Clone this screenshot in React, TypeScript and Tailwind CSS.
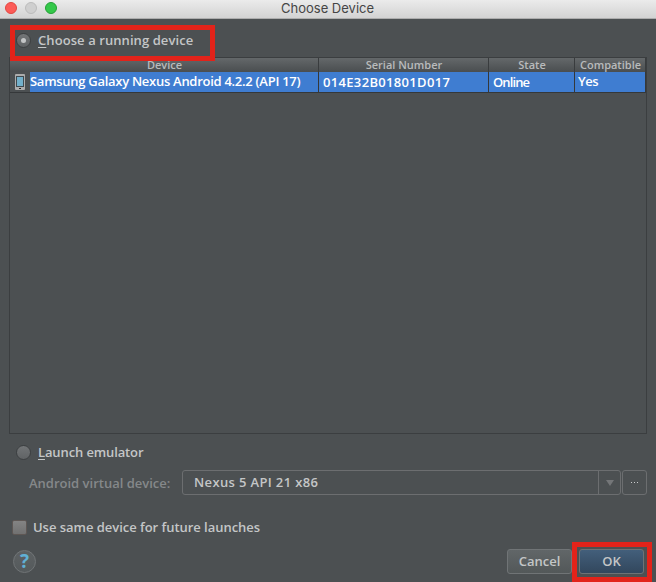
import type { ReactNode } from 'react';

const columns = [
  { title: 'Device', width: 'w-[309px]', track: 'tracking-[0px]' },
  { title: 'Serial Number', width: 'w-[170px]', track: 'tracking-[0px]' },
  { title: 'State', width: 'w-[86px]', track: 'tracking-[0px]' },
  { title: 'Compatible', width: 'w-[71px]', track: 'tracking-[0px]' },
];

function Radio({ checked = false }: { checked?: boolean }) {
  return (
    <span className="flex size-[15px] shrink-0 items-center justify-center rounded-full border border-[#3c3f41] bg-linear-to-b from-[#727577] to-[#606365]">
      {checked && <span className="size-[5px] rounded-full bg-[#c4c6c7]" />}
    </span>
  );
}

function Cell({ width, children }: { width: string; children: ReactNode }) {
  return (
    <div className={`flex h-5 items-center border-r border-[#35383a] bg-[#3f7dd1] pl-1 whitespace-nowrap text-white ${width}`}>
      {children}
    </div>
  );
}

function PhoneIcon() {
  return (
    <svg width="10" height="16" viewBox="0 0 10 16" className="shrink-0">
      <rect width="10" height="16" rx="1" fill="#acacac" />
      <rect x="1" y="2" width="8" height="11" fill="#3f4a50" />
      <rect x="2" y="3" width="6" height="9" fill="#72b0cb" />
      <rect x="4" y="14" width="2" height="1" fill="#222" />
    </svg>
  );
}

export default function App() {
  return (
    <div className="relative flex h-[582px] w-[656px] flex-col overflow-hidden bg-[#4c5052] font-['Open_Sans',sans-serif] text-[13px] font-semibold text-[#c4c6c7]">
      <header className="flex h-[19px] shrink-0 items-center border-b border-[#adadad] bg-linear-to-b from-[#ebebeb] to-[#d3d3d3] pl-[5px]">
        <div className="flex w-[276px] gap-2 pb-0.5">
          <span className="size-3 rounded-full border border-[#e2463f] bg-[#fc5b57]" />
          <span className="size-3 rounded-full border border-[#bcbcbc] bg-[#cfcfcf]" />
          <span className="size-3 rounded-full border border-[#23a035] bg-[#34c84a]" />
        </div>
        <h1 className="pb-px font-['Inter',sans-serif] text-[13px] font-normal text-[#454545]">Choose Device</h1>
      </header>

      <div className="flex h-[38px] shrink-0 items-center gap-[7px] pt-[5px] pl-4">
        <Radio checked />
        <span className="tracking-[0.08px]"><u className="underline-offset-2">C</u>hoose a running device</span>
      </div>

      <section className="mx-[9px] h-[377px] w-[638px] shrink-0 border border-[#3b3e40]">
        <div className="flex h-3.5 bg-linear-to-b from-[#64686a] to-[#4a4e50]">
          {columns.map((c) => (
            <div key={c.title} className={`flex items-center justify-center border-r border-[#393c3e] pb-0.5 pl-px text-[11px] leading-none text-[#b9bbbc] ${c.width} ${c.track}`}>
              {c.title}
            </div>
          ))}
        </div>
        <div className="flex h-[21px] w-[636px] border-b border-[#35383a]">
          <div className="flex w-5 shrink-0 items-center justify-center"><PhoneIcon /></div>
          <div className="flex w-[289px] items-center border-r border-[#35383a] bg-[#3f7dd1] whitespace-nowrap text-white">
            <span className="tracking-[-0.28px]">Samsung Galaxy Nexus Android 4.2.2 (API 17)</span>
          </div>
          <Cell width="w-[170px]"><span className="pt-0.5 tracking-[0.33px]">014E32B01801D017</span></Cell>
          <Cell width="w-[86px]"><span className="pt-0.5 tracking-[-0.9px]">Online</span></Cell>
          <Cell width="w-[71px]"><span className="-ml-px tracking-[-0.5px]">Yes</span></Cell>
        </div>
      </section>

      <div className="flex h-9 shrink-0 items-center gap-[7px] pl-4">
        <Radio />
        <span className="pt-0.5 tracking-[-0.12px]"><u className="underline-offset-2">L</u>aunch emulator</span>
      </div>

      <div className="flex h-[25px] shrink-0 items-center pl-[29px]">
        <span className="w-[153px] pt-0.5 whitespace-nowrap text-[#85888a]">Android virtual device:</span>
        <div className="flex h-[25px] w-[439px] items-center justify-between rounded-[3px] border border-[#6c6e70] pl-[11px]">
          <span className="tracking-[0.36px]">Nexus 5 API 21 x86</span>
          <span className="flex h-full w-[22px] items-center justify-center border-l border-[#6c6e70]">
            <svg width="8" height="6" viewBox="0 0 8 6"><path d="M0 0h8L4 6z" fill="#747678" /></svg>
          </span>
        </div>
        <button className="ml-px flex h-[25px] w-[25px] items-center justify-center rounded-[3px] border border-[#6c6e70]">
          <svg width="7" height="1" viewBox="0 0 7 1"><path d="M0 0h1v1H0zM3 0h1v1H3zM6 0h1v1H6z" fill="#c9cbcc" /></svg>
        </button>
      </div>

      <div className="mt-[19px] flex h-[26px] shrink-0 items-center gap-[6px] pl-3">
        <span className="size-[15px] rounded-[2px] border border-[#5e5754] bg-linear-to-b from-[#848484] to-[#717171]" />
        <span className="pt-0.5 tracking-[-0.03px]">Use same device for future launches</span>
      </div>

      <footer className="mt-[9px] flex h-[25px] shrink-0 items-center pl-[13px]">
        <button className="flex size-[23px] items-center justify-center rounded-full border border-[#707476] bg-linear-to-b from-[#5d6163] to-[#555a5c] text-[19px] leading-none font-bold text-[#60afd4]">?</button>
        <button className="ml-[471px] h-[25px] w-[65px] rounded-[3px] border border-[#707476] bg-linear-to-b from-[#616668] to-[#535859]">Cancel</button>
        <button className="ml-[7px] h-[25px] w-[65px] rounded-[3px] border border-[#6d7275] bg-linear-to-b from-[#435f7b] to-[#32475d]">OK</button>
      </footer>

      <div className="pointer-events-none absolute top-[25px] left-[10px] h-9 w-[205px] border-[5px] border-[#e2231a]" />
      <div className="pointer-events-none absolute top-[542px] left-[572px] h-10 w-20 border-[5px] border-[#e2231a]" />
    </div>
  );
}
